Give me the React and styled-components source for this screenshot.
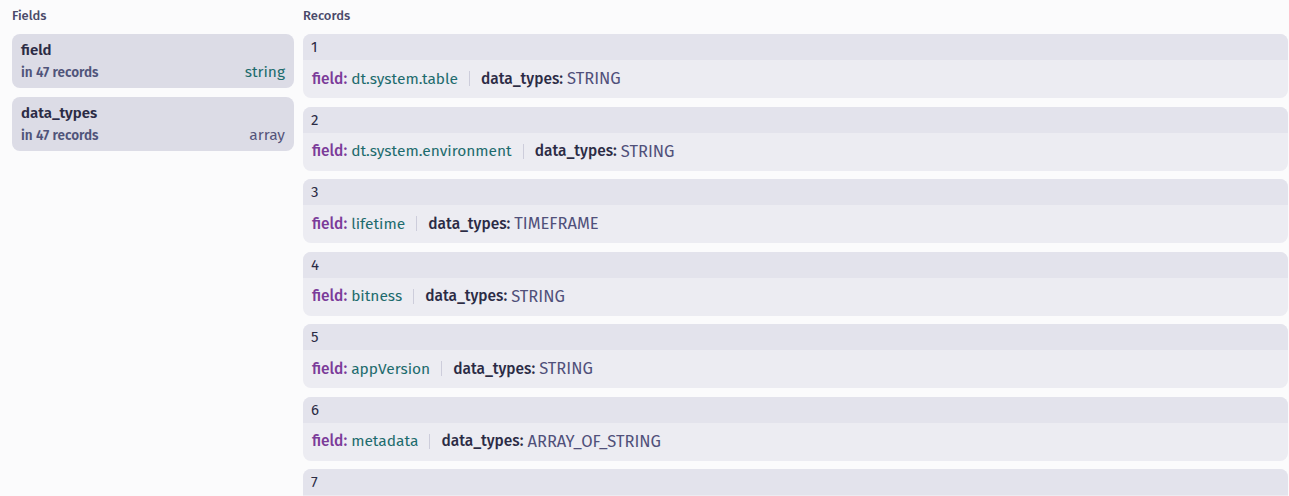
import React from "react";
import styled, { createGlobalStyle } from "styled-components";

const Global = createGlobalStyle`
  html, body { margin: 0; padding: 0; background: #fbfbfc; }
  body { font-family: "Fira Sans", "Noto Sans", "Open Sans", sans-serif; color: #2b2b45; }
`;

const Page = styled.div`
  display: grid;
  grid-template-columns: 282px 1fr;
  column-gap: 9px;
  padding: 6px 1px 0 12px;
  height: 496px;
  box-sizing: border-box;
  overflow: hidden;
`;

const Column = styled.div`
  display: flex;
  flex-direction: column;
  min-width: 0;
`;

const SectionLabel = styled.div`
  font-size: 13px;
  font-weight: 500;
  color: #4a4a6a;
  height: 20px;
  line-height: 20px;
  margin-bottom: 8px;
`;

const FieldList = styled.div`
  display: flex;
  flex-direction: column;
  gap: 9px;
`;

const FieldCard = styled.div`
  background: #dcdce6;
  border-radius: 8px;
  padding: 6px 9px 3px 9px;
  display: flex;
  flex-direction: column;
`;

const FieldName = styled.div`
  font-size: 15px;
  font-weight: 600;
  color: #2b2b45;
  line-height: 20px;
`;

const FieldMeta = styled.div`
  display: flex;
  justify-content: space-between;
  align-items: baseline;
  line-height: 24px;
`;

const Count = styled.span`
  font-size: 13.5px;
  font-weight: 600;
  color: #50547a;
`;

const TypeLabel = styled.span`
  font-size: 15.5px;
  color: ${(p) => (p.$kind === "string" ? "#1d6b6d" : "#55557a")};
`;

const RecordList = styled.div`
  display: flex;
  flex-direction: column;
  gap: 8.5px;
`;

const RecordCard = styled.div`
  border-radius: 8px;
  overflow: hidden;
  background: #ececf2;
  flex-shrink: 0;
`;

const RecordHeader = styled.div`
  background: #e3e3ec;
  height: 26px;
  line-height: 26px;
  padding: 0 8px;
  font-size: 15px;
  color: #2b2b45;
`;

const RecordBody = styled.div`
  height: 37px;
  padding-bottom: 1px;
  display: flex;
  align-items: center;
  padding-left: 9px;
  font-size: 15.5px;
  white-space: nowrap;
`;

const Key = styled.span`
  font-weight: 500;
  color: ${(p) => (p.$accent ? "#7b3b99" : "#2b2b45")};
  margin-right: 4px;
`;

const Value = styled.span`
  color: ${(p) => (p.$upper ? "#50507a" : "#1d6b6d")};
  font-size: ${(p) => (p.$upper ? "16.5px" : "inherit")};
`;

const Sep = styled.span`
  display: inline-block;
  width: 1px;
  height: 15px;
  background: #cdcddb;
  margin: 0 11px;
`;

const fields = [
  { name: "field", count: "in 47 records", type: "string" },
  { name: "data_types", count: "in 47 records", type: "array" },
];

const records = [
  ["dt.system.table", "STRING"],
  ["dt.system.environment", "STRING"],
  ["lifetime", "TIMEFRAME"],
  ["bitness", "STRING"],
  ["appVersion", "STRING"],
  ["metadata", "ARRAY_OF_STRING"],
  ["id", "STRING"],
];

export default function App() {
  return (
    <>
      <Global />
      <Page>
        <Column>
          <SectionLabel>Fields</SectionLabel>
          <FieldList>
            {fields.map((f) => (
              <FieldCard key={f.name}>
                <FieldName>{f.name}</FieldName>
                <FieldMeta>
                  <Count>{f.count}</Count>
                  <TypeLabel $kind={f.type}>{f.type}</TypeLabel>
                </FieldMeta>
              </FieldCard>
            ))}
          </FieldList>
        </Column>
        <Column>
          <SectionLabel>Records</SectionLabel>
          <RecordList>
            {records.map(([v, t], i) => (
              <RecordCard key={i}>
                <RecordHeader>{i + 1}</RecordHeader>
                <RecordBody>
                  <Key $accent>field:</Key>
                  <Value>{v}</Value>
                  <Sep />
                  <Key>data_types:</Key>
                  <Value $upper>{t}</Value>
                </RecordBody>
              </RecordCard>
            ))}
          </RecordList>
        </Column>
      </Page>
    </>
  );
}
